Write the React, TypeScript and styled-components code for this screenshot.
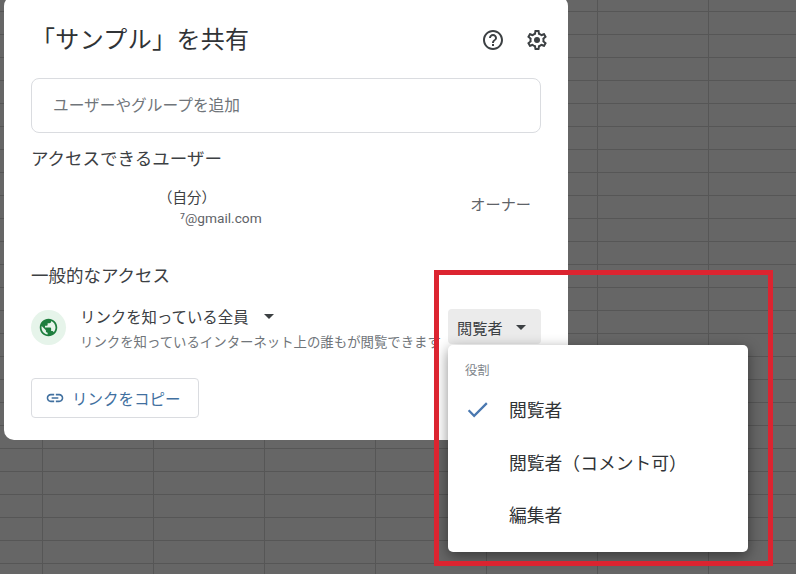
import { createGlobalStyle, styled } from "styled-components"
import { MdArrowDropDown, MdCheck, MdHelpOutline, MdLink, MdPublic } from "react-icons/md"

const GlobalStyle = createGlobalStyle`
    html, body {
        margin: 0;
        padding: 0;
    }
    body {
        font-family: "Noto Sans CJK JP", "Noto Sans", sans-serif;
        color: #3c4043;
        overflow: hidden;
    }
`

const Sheet = styled.main`
    position: relative;
    width: 796px;
    height: 574px;
    overflow: hidden;
    background-color: #666666;
    background-image:
        repeating-linear-gradient(to right, transparent 0 42px, #565656 42px 43px, transparent 43px 111px),
        repeating-linear-gradient(to bottom, transparent 0 11px, #565656 11px 12px, transparent 12px 23px);
`

const Dialog = styled.section`
    position: absolute;
    left: 4px;
    top: -4px;
    width: 564px;
    height: 444px;
    box-sizing: border-box;
    padding: 0 27px;
    background: #ffffff;
    border-radius: 10px;
    display: flex;
    flex-direction: column;
`

const Header = styled.header`
    height: 82px;
    box-sizing: border-box;
    padding-top: 2px;
    display: flex;
    align-items: center;
    justify-content: space-between;
    flex-shrink: 0;
`

const Title = styled.h1`
    margin: 0;
    font-size: 24px;
    font-weight: 400;
    line-height: 34px;
    letter-spacing: 0.35px;
    color: #303336;
`

const HeaderIcons = styled.div`
    display: flex;
    align-items: center;
    gap: 20px;
    margin: 4px -8px 0 0;
    color: #3c4043;
`

const AddBox = styled.div`
    height: 55px;
    box-sizing: border-box;
    border: 1px solid #dadce0;
    border-radius: 8px;
    padding: 0 21px 2px;
    display: flex;
    align-items: center;
    font-size: 15.7px;
    color: #70757a;
    flex-shrink: 0;
`

const SectionTitle = styled.h2<{ $top: number }>`
    margin: ${(p) => p.$top}px 0 0;
    font-size: 17.5px;
    font-weight: 400;
    line-height: 26px;
    color: #3c4043;
`

const Person = styled.div`
    height: 48px;
    margin-top: 12px;
    display: flex;
    justify-content: space-between;
    align-items: center;
`

const PersonText = styled.div`
    display: flex;
    flex-direction: column;
    padding-left: 127px;
    line-height: 20px;
`

const Self = styled.span`
    font-size: 14.5px;
`

const Mail = styled.span`
    font-family: Roboto, "Liberation Sans", sans-serif;
    font-size: 13.7px;
    color: #5f6368;
    padding-left: 22px;
    margin-top: 1px;
`

const Owner = styled.span`
    font-size: 15.2px;
    color: #5f6368;
    margin: 0 10px 8px 0;
`

const AccessRow = styled.div`
    margin-top: 16px;
    height: 47px;
    display: flex;
    align-items: center;
    gap: 14px;
`

const GlobeBadge = styled.span`
    width: 35px;
    height: 35px;
    border-radius: 50%;
    background: #e6f4ea;
    color: #1e7e3e;
    display: flex;
    align-items: center;
    justify-content: center;
    flex-shrink: 0;
`

const AccessText = styled.div`
    width: 354px;
    display: flex;
    flex-direction: column;
    gap: 4px;
    white-space: nowrap;
    flex-shrink: 0;
`

const AccessName = styled.span`
    display: flex;
    align-items: center;
    font-size: 15.4px;
    line-height: 22px;
`

const AccessNote = styled.span`
    font-size: 13.4px;
    line-height: 19px;
    color: #70757a;
`

const RoleButton = styled.div`
    width: 93px;
    height: 35px;
    box-sizing: border-box;
    margin-bottom: 2px;
    padding-left: 9px;
    border-radius: 4px;
    background: #ebebeb;
    display: flex;
    align-items: center;
    font-size: 15.2px;
    flex-shrink: 0;
`

const CopyButton = styled.div`
    margin-top: 27px;
    width: 168px;
    height: 40px;
    box-sizing: border-box;
    border: 1px solid #dadce0;
    border-radius: 4px;
    padding-left: 13px;
    display: flex;
    align-items: center;
    gap: 7px;
    font-size: 15.5px;
    color: #41709f;
`

const Menu = styled.div`
    position: absolute;
    left: 448px;
    top: 345px;
    width: 300px;
    height: 207px;
    box-sizing: border-box;
    padding-top: 15px;
    background: #ffffff;
    border-radius: 5px;
    box-shadow: 0 4px 14px rgba(0, 0, 0, 0.45);
`

const MenuLabel = styled.div`
    padding-left: 17px;
    font-size: 12.3px;
    line-height: 20px;
    color: #80868b;
`

const MenuList = styled.ul`
    margin: 3px 0 0;
    padding: 0;
    list-style: none;
`

const MenuItem = styled.li`
    height: 52.5px;
    display: flex;
    align-items: center;
    font-size: 17.8px;
    color: #303336;
`

const CheckSlot = styled.span`
    width: 61px;
    padding-left: 16px;
    box-sizing: border-box;
    display: flex;
    color: #4a78b0;
`

const RedFrame = styled.div`
    position: absolute;
    left: 434px;
    top: 270px;
    width: 339px;
    height: 296px;
    box-sizing: border-box;
    border: 5px solid #dc2430;
    pointer-events: none;
`

const SettingsIcon = () => (
    <svg width="24" height="24" viewBox="0 0 24 24" fill="currentColor">
        <path d="M19.43 12.98c.04-.32.07-.64.07-.98 0-.34-.03-.66-.07-.98l2.11-1.65c.19-.15.24-.42.12-.64l-2-3.46c-.09-.16-.26-.25-.44-.25-.06 0-.12.01-.17.03l-2.49 1c-.52-.4-1.08-.73-1.69-.98l-.38-2.65C14.46 2.18 14.25 2 14 2h-4c-.25 0-.46.18-.49.42l-.38 2.65c-.61.25-1.17.59-1.69.98l-2.49-1c-.06-.02-.12-.03-.18-.03-.17 0-.34.09-.43.25l-2 3.46c-.13.22-.07.49.12.64l2.11 1.65c-.04.32-.07.65-.07.98 0 .33.03.66.07.98l-2.11 1.65c-.19.15-.24.42-.12.64l2 3.46c.09.16.26.25.44.25.06 0 .12-.01.17-.03l2.49-1c.52.4 1.08.73 1.69.98l.38 2.65c.03.24.24.42.49.42h4c.25 0 .46-.18.49-.42l.38-2.65c.61-.25 1.17-.59 1.69-.98l2.49 1c.06.02.12.03.18.03.17 0 .34-.09.43-.25l2-3.46c.12-.22.07-.49-.12-.64l-2.11-1.65zm-1.98-1.71c.04.31.05.52.05.73 0 .21-.02.43-.05.73l-.14 1.13.89.7 1.08.84-.7 1.21-1.27-.51-1.04-.42-.9.68c-.43.32-.84.56-1.25.73l-1.06.43-.16 1.13-.2 1.35h-1.4l-.19-1.35-.16-1.13-1.06-.43c-.43-.18-.83-.41-1.23-.71l-.91-.7-1.06.43-1.27.51-.7-1.21 1.08-.84.89-.7-.14-1.13c-.03-.31-.05-.54-.05-.74s.02-.43.05-.73l.14-1.13-.89-.7-1.08-.84.7-1.21 1.27.51 1.04.42.9-.68c.43-.32.84-.56 1.25-.73l1.06-.43.16-1.13.2-1.35h1.39l.19 1.35.16 1.13 1.06.43c.43.18.83.41 1.23.71l.91.7 1.06-.43 1.27-.51.7 1.21-1.07.85-.89.7.14 1.13z" />
        <circle cx="12" cy="12" r="3" />
    </svg>
)

const roles = ["閲覧者", "閲覧者（コメント可）", "編集者"]

const App = () => {
    return (
        <Sheet>
            <GlobalStyle />
            <Dialog>
                <Header>
                    <Title>「サンプル」を共有</Title>
                    <HeaderIcons>
                        <MdHelpOutline size={24} />
                        <SettingsIcon />
                    </HeaderIcons>
                </Header>
                <AddBox>ユーザーやグループを追加</AddBox>
                <SectionTitle $top={12}>アクセスできるユーザー</SectionTitle>
                <Person>
                    <PersonText>
                        <Self>（自分）</Self>
                        <Mail>⁷@gmail.com</Mail>
                    </PersonText>
                    <Owner>オーナー</Owner>
                </Person>
                <SectionTitle $top={31}>一般的なアクセス</SectionTitle>
                <AccessRow>
                    <GlobeBadge>
                        <MdPublic size={21} />
                    </GlobeBadge>
                    <AccessText>
                        <AccessName>
                            リンクを知っている全員
                            <MdArrowDropDown size={24} style={{ marginLeft: 8 }} />
                        </AccessName>
                        <AccessNote>リンクを知っているインターネット上の誰もが閲覧できます</AccessNote>
                    </AccessText>
                    <RoleButton>
                        閲覧者
                        <MdArrowDropDown size={24} style={{ marginLeft: 6 }} />
                    </RoleButton>
                </AccessRow>
                <CopyButton>
                    <MdLink size={20} />
                    リンクをコピー
                </CopyButton>
            </Dialog>
            <Menu>
                <MenuLabel>役割</MenuLabel>
                <MenuList>
                    {roles.map((role, i) => (
                        <MenuItem key={role}>
                            <CheckSlot>{i === 0 && <MdCheck size={27} />}</CheckSlot>
                            {role}
                        </MenuItem>
                    ))}
                </MenuList>
            </Menu>
            <RedFrame />
        </Sheet>
    )
}

export default App
